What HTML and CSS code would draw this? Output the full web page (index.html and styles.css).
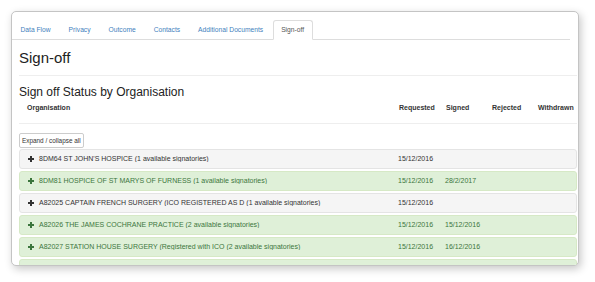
FILE: index.html
```html
<!DOCTYPE html>
<html lang="en">
<head>
  <meta charset="UTF-8">
  <title>Sign-off</title>
  <link rel="stylesheet" href="styles.css">
</head>
<body>
  <div class="window">
    <ul class="tabs">
      <li><a href="#">Data Flow</a></li>
      <li><a href="#">Privacy</a></li>
      <li><a href="#">Outcome</a></li>
      <li><a href="#">Contacts</a></li>
      <li><a href="#">Additional Documents</a></li>
      <li class="active"><a href="#">Sign-off</a></li>
    </ul>
    <div class="content">
      <h2 class="page-title">Sign-off</h2>
      <h3 class="section-title">Sign off Status by Organisation</h3>
      <div class="table-head">
        <span class="col-org">Organisation</span>
        <span>Requested</span>
        <span>Signed</span>
        <span>Rejected</span>
        <span>Withdrawn</span>
      </div>
      <button class="btn-expand">Expand / collapse all</button>
      <div class="org-list">
        <div class="org-row">
          <span class="org-name"><svg class="plus" viewBox="0 0 6 6"><path d="M3 0V6M0 3H6"/></svg>8DM64 ST JOHN'S HOSPICE (1 available signatories)</span>
          <span>15/12/2016</span><span></span><span></span><span></span>
        </div>
        <div class="org-row signed">
          <span class="org-name"><svg class="plus" viewBox="0 0 6 6"><path d="M3 0V6M0 3H6"/></svg>8DM81 HOSPICE OF ST MARYS OF FURNESS (1 available signatories)</span>
          <span>15/12/2016</span><span>28/2/2017</span><span></span><span></span>
        </div>
        <div class="org-row">
          <span class="org-name"><svg class="plus" viewBox="0 0 6 6"><path d="M3 0V6M0 3H6"/></svg>A82025 CAPTAIN FRENCH SURGERY (ICO REGISTERED AS D (1 available signatories)</span>
          <span>15/12/2016</span><span></span><span></span><span></span>
        </div>
        <div class="org-row signed">
          <span class="org-name"><svg class="plus" viewBox="0 0 6 6"><path d="M3 0V6M0 3H6"/></svg>A82026 THE JAMES COCHRANE PRACTICE (2 available signatories)</span>
          <span>15/12/2016</span><span>15/12/2016</span><span></span><span></span>
        </div>
        <div class="org-row signed">
          <span class="org-name"><svg class="plus" viewBox="0 0 6 6"><path d="M3 0V6M0 3H6"/></svg>A82027 STATION HOUSE SURGERY (Registered with ICO (2 available signatories)</span>
          <span>15/12/2016</span><span>16/12/2016</span><span></span><span></span>
        </div>
        <div class="org-row signed">
          <span class="org-name"><svg class="plus" viewBox="0 0 6 6"><path d="M3 0V6M0 3H6"/></svg>A82028 THE HOLLIES SURGERY (ICO REGISTERED AS THE (2 available signatories)</span>
          <span>15/12/2016</span><span>19/12/2016</span><span></span><span></span>
        </div>
      </div>
    </div>
  </div>
</body>
</html>
```

FILE: styles.css
```css
body {
  margin: 0;
  padding: 11px 0 0 11px;
  background: #fff;
  font-family: 'Liberation Sans', Arial, sans-serif;
  color: #333;
  overflow: hidden;
  height: 282px;
  box-sizing: border-box;
}
.window {
  width: 568px;
  height: 255px;
  box-sizing: border-box;
  border: 1px solid #c4c4c4;
  border-radius: 5px;
  background: #fff;
  box-shadow: 2px 3px 8px rgba(0, 0, 0, 0.22);
  overflow: hidden;
}
.tabs {
  list-style: none;
  margin: 8px 8px 0 0;
  padding: 0;
  display: flex;
  border-bottom: 1px solid #ddd;
}
.tabs li {
  margin-right: 1px;
  margin-bottom: -1px;
}
.tabs a {
  display: block;
  padding: 0 7.5px;
  line-height: 18px;
  font-size: 6.7px;
  color: #3f7fbd;
  text-decoration: none;
  border: 1px solid transparent;
  border-radius: 3px 3px 0 0;
}
.tabs .active a {
  color: #555;
  background: #fff;
  border-color: #ddd #ddd #fff;
}
.content {
  padding: 0 1px 0 7px;
}
.page-title {
  margin: 10px 0 0;
  padding-bottom: 8px;
  border-bottom: 1px solid #eee;
  font-size: 15px;
  line-height: 16.5px;
  font-weight: normal;
  color: #222;
}
.section-title {
  margin: 10px 0 0;
  font-size: 12px;
  line-height: 13px;
  font-weight: normal;
  color: #222;
}
.table-head,
.org-row {
  display: grid;
  grid-template-columns: 1fr 47px 46px 46px 39px;
  align-items: center;
}
.table-head {
  margin-top: 4px;
  padding-bottom: 10px;
  border-bottom: 1px solid #eee;
  font-size: 7px;
  line-height: 10px;
  font-weight: bold;
  color: #333;
}
.col-org {
  padding-left: 8px;
}
.btn-expand {
  display: block;
  margin: 9px 0 1px;
  padding: 2px 2px;
  font-family: inherit;
  font-size: 6.4px;
  line-height: 9px;
  color: #333;
  background: #fff;
  border: 1px solid #ccc;
  border-radius: 2px;
}
.org-row {
  height: 20px;
  box-sizing: border-box;
  margin-bottom: 2px;
  background: #f5f5f5;
  border: 1px solid #e4e4e4;
  border-radius: 3px;
  font-size: 7px;
  color: #333;
  white-space: nowrap;
}
.org-row.signed {
  background: #dff0d8;
  border-color: #d6e9c6;
  color: #3c763d;
}
.org-name {
  display: flex;
  align-items: center;
  padding-left: 8px;
  overflow: hidden;
}
.plus {
  width: 6px;
  height: 6px;
  margin-right: 5px;
  flex: none;
  stroke: #333;
  stroke-width: 2;
}
.signed .plus {
  stroke: #3c763d;
}
```
